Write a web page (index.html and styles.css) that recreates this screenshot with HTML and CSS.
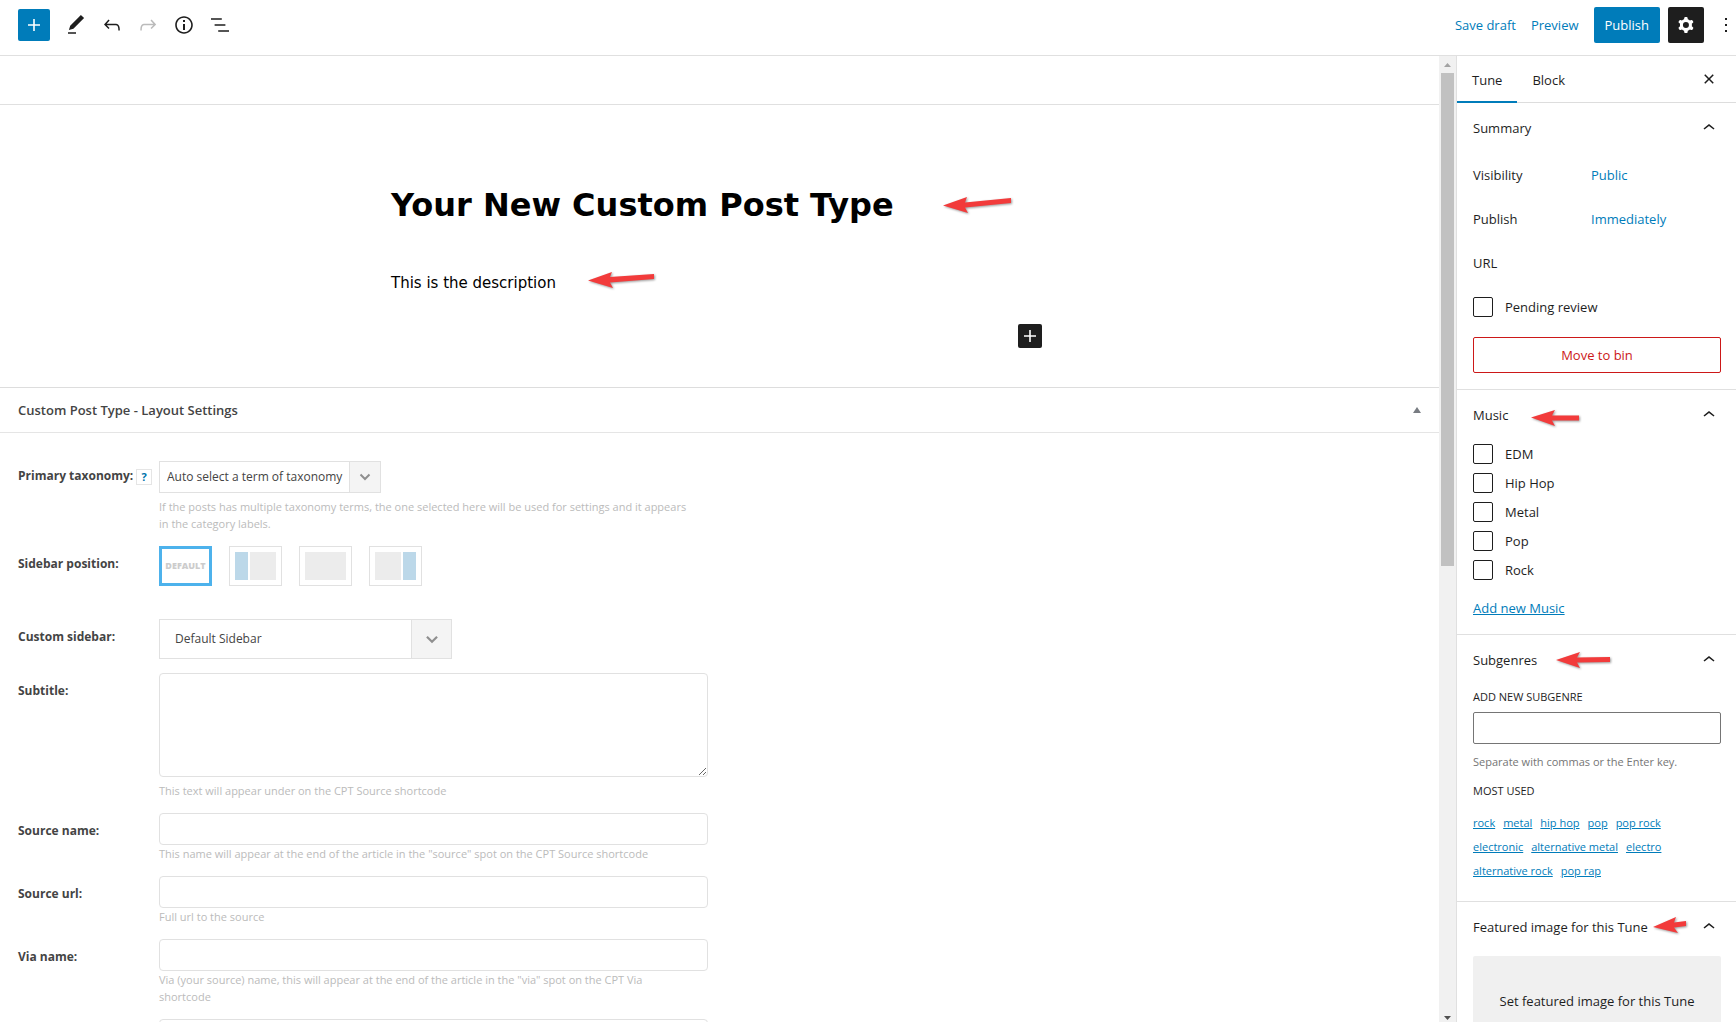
FILE: index.html
```
<!DOCTYPE html>
<html lang="en">
<head>
  <meta charset="UTF-8">
  <title>Add New Tune</title>
  <link rel="stylesheet" href="styles.css">
</head>
<body>

<svg class="defs" aria-hidden="true">
  <symbol id="chevron-up" viewBox="0 0 24 24"><path d="M6.5 12.4L12 8l5.5 4.4-.9 1.2L12 10l-4.5 3.6-1-1.2z"/></symbol>
  <symbol id="plus" viewBox="0 0 24 24"><path d="M18 11.2h-5.2V6h-1.6v5.2H6v1.6h5.2V18h1.6v-5.2H18z"/></symbol>
  <symbol id="caret" viewBox="0 0 12 8"><path d="M1.5 1.5L6 6l4.5-4.5" fill="none" stroke="#8f8f8f" stroke-width="2"/></symbol>
</svg>

<header class="toolbar">
  <div class="toolbar-left">
    <button class="btn-insert" aria-label="Add block"><svg width="24" height="24"><use href="#plus"/></svg></button>
    <button class="btn-icon" aria-label="Tools"><svg width="24" height="24" viewBox="0 0 24 24"><path d="M20.1 5.1L16.9 2 6.2 12.7l-1.3 4.4 4.5-1.3L20.1 5.1zM4 20.8h8v-1.5H4v1.5z"/></svg></button>
    <button class="btn-icon" aria-label="Undo"><svg width="24" height="24" viewBox="0 0 24 24"><path d="M18.3 11.7c-.6-.6-1.4-.9-2.3-.9H6.7l2.9-3.3-1.1-1-4.5 5L8.5 16l1-1-2.7-2.7H16c.5 0 .9.2 1.3.5 1 1 1 3.4 1 4.5v.3h1.5v-.2c0-1.5 0-4.3-1.5-5.7z"/></svg></button>
    <button class="btn-icon" aria-label="Redo" disabled><svg width="24" height="24" viewBox="0 0 24 24"><path d="M15.6 6.5l-1.1 1 2.9 3.3H8c-.9 0-1.7.3-2.3.9-1.4 1.5-1.4 4.2-1.4 5.6v.2h1.5v-.3c0-1.1 0-3.5 1-4.5.3-.3.7-.5 1.3-.5h9.2L14.5 15l1.1 1.1 4.6-4.6-4.6-5z"/></svg></button>
    <button class="btn-icon" aria-label="Details"><svg width="24" height="24" viewBox="0 0 24 24"><path d="M12 3.2c-4.8 0-8.8 3.9-8.8 8.8 0 4.8 3.9 8.8 8.8 8.8 4.8 0 8.8-3.9 8.8-8.8 0-4.8-4-8.8-8.8-8.8zm0 16c-4 0-7.2-3.3-7.2-7.2C4.8 8 8 4.8 12 4.8s7.2 3.3 7.2 7.2c0 4-3.2 7.2-7.2 7.2zM11 17h2v-6h-2v6zm0-8h2V7h-2v2z"/></svg></button>
    <button class="btn-icon" aria-label="List view"><svg width="24" height="24" viewBox="0 0 24 24"><path d="M13.8 5.2H3v1.5h10.8V5.2zm-3.6 12v1.5H21v-1.5H10.2zm7.2-6H6.6v1.5h10.8v-1.5z"/></svg></button>
  </div>
  <div class="toolbar-right">
    <button class="btn-link">Save draft</button>
    <button class="btn-link">Preview</button>
    <button class="btn-publish">Publish</button>
    <button class="btn-settings" aria-label="Settings"><svg width="24" height="24" viewBox="0 0 24 24"><path fill-rule="evenodd" d="M10.289 4.836A1 1 0 0111.275 4h1.306a1 1 0 01.987.836l.244 1.466c.787.26 1.503.679 2.108 1.218l1.393-.522a1 1 0 011.216.437l.653 1.13a1 1 0 01-.23 1.273l-1.148.944a6.025 6.025 0 010 2.435l1.149.946a1 1 0 01.23 1.272l-.653 1.13a1 1 0 01-1.216.437l-1.394-.522c-.605.54-1.32.958-2.108 1.218l-.244 1.466a1 1 0 01-.987.836h-1.306a1 1 0 01-.986-.836l-.244-1.466a5.995 5.995 0 01-2.108-1.218l-1.394.522a1 1 0 01-1.217-.436l-.653-1.131a1 1 0 01.23-1.272l1.149-.946a6.026 6.026 0 010-2.435l-1.148-.944a1 1 0 01-.23-1.272l.653-1.131a1 1 0 011.217-.437l1.393.522a5.994 5.994 0 012.108-1.218l.244-1.466zM14.929 12a3 3 0 11-6 0 3 3 0 016 0z"/></svg></button>
    <button class="btn-more" aria-label="Options"><svg width="24" height="24" viewBox="0 0 24 24"><path d="M13 19h-2v-2h2v2zm0-6h-2v-2h2v2zm0-6h-2V5h2v2z"/></svg></button>
  </div>
</header>

<div class="workspace">
  <main class="content">
    <div class="strip"></div>

    <section class="canvas">
      <div class="canvas-inner">
        <h1 class="post-title">Your New Custom Post Type
          <svg class="arrow arrow-title" width="70" height="20" viewBox="0 0 70 20"><path d="M1 10.5L25 2l-2 5.5L69 3v5l-46 4.5 3 5.5z"/></svg>
        </h1>
        <p class="post-text">This is the description
          <svg class="arrow arrow-text" width="68" height="20" viewBox="0 0 68 20"><path d="M1 10.5L25 2l-2 5L67 4v5l-44 3.5 3 5.5z"/></svg>
        </p>
        <button class="btn-append" aria-label="Add block"><svg width="24" height="24"><use href="#plus"/></svg></button>
      </div>
    </section>

    <section class="metabox">
      <div class="metabox-head">
        <h2>Custom Post Type - Layout Settings</h2>
        <button class="metabox-toggle" aria-label="Toggle panel"><svg width="8" height="6" viewBox="0 0 8 6"><path d="M4 0l4 6H0z"/></svg></button>
      </div>

      <div class="fields">
        <div class="field field-top">
          <div class="field-name"><label for="taxonomy">Primary taxonomy:</label><button class="help" aria-label="Help">?</button></div>
          <div class="field-body">
            <div class="select select-small">
              <select id="taxonomy"><option>Auto select a term of taxonomy</option></select>
              <span class="select-arrow"><svg width="12" height="8"><use href="#caret"/></svg></span>
            </div>
            <p class="hint hint-far">If the posts has multiple taxonomy terms, the one selected here will be used for settings and it appears in the category labels.</p>
          </div>
        </div>

        <div class="field field-positions">
          <div class="field-name" id="position-label">Sidebar position:</div>
          <div class="positions" role="group" aria-labelledby="position-label">
            <button class="position active">DEFAULT</button>
            <button class="position" aria-label="Left"><span class="bar"></span><span class="page"></span></button>
            <button class="position" aria-label="None"><span class="page"></span></button>
            <button class="position" aria-label="Right"><span class="page"></span><span class="bar"></span></button>
          </div>
        </div>

        <div class="field">
          <div class="field-name"><label for="sidebar">Custom sidebar:</label></div>
          <div class="select select-large">
            <select id="sidebar"><option>Default Sidebar</option></select>
            <span class="select-arrow"><svg width="14" height="9"><use href="#caret"/></svg></span>
          </div>
        </div>

        <div class="field">
          <div class="field-name"><label for="subtitle">Subtitle:</label></div>
          <div class="field-body">
            <textarea id="subtitle"></textarea>
            <p class="hint hint-far">This text will appear under on the CPT Source shortcode</p>
          </div>
        </div>

        <div class="field">
          <div class="field-name"><label for="source-name">Source name:</label></div>
          <div class="field-body">
            <input type="text" id="source-name">
            <p class="hint">This name will appear at the end of the article in the "source" spot on the CPT Source shortcode</p>
          </div>
        </div>

        <div class="field">
          <div class="field-name"><label for="source-url">Source url:</label></div>
          <div class="field-body">
            <input type="text" id="source-url">
            <p class="hint">Full url to the source</p>
          </div>
        </div>

        <div class="field">
          <div class="field-name"><label for="via-name">Via name:</label></div>
          <div class="field-body">
            <input type="text" id="via-name">
            <p class="hint">Via (your source) name, this will appear at the end of the article in the "via" spot on the CPT Via shortcode</p>
          </div>
        </div>

        <div class="field">
          <div class="field-name"></div>
          <div class="field-body"><input type="text" aria-label="Via url"></div>
        </div>
      </div>
    </section>
  </main>

  <div class="scrollbar">
    <svg class="scroll-up" width="17" height="17" viewBox="0 0 17 17"><path d="M5 11l3.5-4 3.5 4z"/></svg>
    <div class="thumb"></div>
    <svg class="scroll-down" width="17" height="17" viewBox="0 0 17 17"><path d="M5 11l3.5 4 3.5-4z"/></svg>
  </div>

  <aside class="sidebar">
    <div class="tabs">
      <button class="tab active">Tune</button>
      <button class="tab">Block</button>
      <button class="close" aria-label="Close settings"><svg width="24" height="24" viewBox="0 0 24 24"><path d="M12 13.06l3.712 3.713 1.061-1.06L13.061 12l3.712-3.712-1.06-1.06L12 10.938 8.288 7.227l-1.061 1.06L10.939 12l-3.712 3.712 1.06 1.061L12 13.061z"/></svg></button>
    </div>

    <section class="panel">
      <h2><button class="panel-head">Summary<svg class="chevron" width="24" height="24"><use href="#chevron-up"/></svg></button></h2>
      <div class="panel-row"><span>Visibility</span><button class="btn-link">Public</button></div>
      <div class="panel-row"><span>Publish</span><button class="btn-link">Immediately</button></div>
      <div class="panel-row"><span>URL</span></div>
      <label class="check check-review"><input type="checkbox">Pending review</label>
      <button class="btn-bin">Move to bin</button>
    </section>

    <section class="panel">
      <h2><button class="panel-head">Music<svg class="arrow arrow-music" width="50" height="20" viewBox="0 0 50 20"><path d="M1 9.5L25 2l-3 5.5h27v5H22L25 18z"/></svg><svg class="chevron" width="24" height="24"><use href="#chevron-up"/></svg></button></h2>
      <div class="checks">
        <label class="check"><input type="checkbox">EDM</label>
        <label class="check"><input type="checkbox">Hip Hop</label>
        <label class="check"><input type="checkbox">Metal</label>
        <label class="check"><input type="checkbox">Pop</label>
        <label class="check"><input type="checkbox">Rock</label>
      </div>
      <a class="add-term" href="#">Add new Music</a>
    </section>

    <section class="panel">
      <h2><button class="panel-head">Subgenres<svg class="arrow arrow-subgenres" width="56" height="20" viewBox="0 0 56 20"><path d="M1 10L25 2l-3 5.5L55 7v5l-33 .5L25 18z"/></svg><svg class="chevron" width="24" height="24"><use href="#chevron-up"/></svg></button></h2>
      <label class="caps" for="subgenre">ADD NEW SUBGENRE</label>
      <input type="text" id="subgenre" class="token-input">
      <p class="token-help">Separate with commas or the Enter key.</p>
      <h3 class="caps">MOST USED</h3>
      <div class="tags">
        <a href="#">rock</a>
        <a href="#">metal</a>
        <a href="#">hip hop</a>
        <a href="#">pop</a>
        <a href="#">pop rock</a>
        <a href="#">electronic</a>
        <a href="#">alternative metal</a>
        <a href="#">electro</a>
        <a href="#">alternative rock</a>
        <a href="#">pop rap</a>
      </div>
    </section>

    <section class="panel">
      <h2><button class="panel-head">Featured image for this Tune<svg class="arrow arrow-featured" width="36" height="20" viewBox="0 0 36 20"><path d="M1 12L24 2l-2 5.5L34 6v5l-12 1.5 4 5.5z"/></svg><svg class="chevron" width="24" height="24"><use href="#chevron-up"/></svg></button></h2>
      <button class="btn-image">Set featured image for this Tune</button>
    </section>
  </aside>
</div>

</body>
</html>
```

FILE: styles.css
```
* {
  box-sizing: border-box;
}

body {
  margin: 0;
  height: 100vh;
  display: flex;
  flex-direction: column;
  overflow: hidden;
  font-family: "Segoe UI", "Open Sans", sans-serif;
  font-size: 13px;
  line-height: 20px;
  color: #1e1e1e;
  background: #fff;
}

h1, h2, h3, p {
  margin: 0;
  font-size: inherit;
}

button, input, select, textarea {
  font: inherit;
  color: inherit;
}

button {
  padding: 0;
  border: none;
  background: none;
  cursor: pointer;
}

svg {
  display: block;
  fill: currentColor;
}

.defs {
  display: none;
}

/* toolbar */
.toolbar {
  display: flex;
  flex: none;
  justify-content: space-between;
  height: 56px;
  padding-bottom: 5px;
  border-bottom: 1px solid #e0e0e0;
}

.toolbar-left, .toolbar-right {
  display: flex;
  align-items: center;
}

.toolbar-left {
  padding-left: 18px;
}

.toolbar-left button, .toolbar-right button {
  display: flex;
  align-items: center;
  justify-content: center;
}

.btn-insert {
  width: 32px;
  height: 32px;
  margin-right: 8px;
  border-radius: 2px;
  background: #007cba;
  color: #fff;
}

.btn-icon {
  width: 36px;
  height: 36px;
}

.btn-icon:disabled {
  color: #bbb;
}

.btn-link {
  color: #007cba;
}

.toolbar-right .btn-link {
  margin-right: 15px;
}

.btn-publish {
  height: 36px;
  padding: 0 11px;
  border-radius: 2px;
  background: #007cba;
  color: #fff;
}

.btn-settings {
  width: 36px;
  height: 36px;
  margin: 0 4px 0 8px;
  border-radius: 2px;
  background: #1e1e1e;
  color: #fff;
}

.btn-more {
  width: 36px;
  margin-right: -8px;
}

/* layout */
.workspace {
  display: flex;
  flex: 1;
  min-height: 0;
}

.content {
  flex: 1;
  min-width: 0;
  overflow: hidden;
}

.scrollbar {
  display: flex;
  flex: none;
  flex-direction: column;
  align-items: center;
  width: 17px;
  background: #f1f1f1;
}

.scroll-up {
  color: #a3a3a3;
}

.scroll-down {
  margin-top: auto;
  color: #505050;
}

.thumb {
  width: 13px;
  height: 51%;
  background: #c1c1c1;
}

.sidebar {
  flex: none;
  width: 280px;
  overflow: hidden;
  border-left: 1px solid #e0e0e0;
}

/* editor canvas */
.strip {
  height: 49px;
  border-bottom: 1px solid #e0e0e0;
}

.canvas {
  padding: 80px 6px 39px 0;
}

.canvas-inner {
  max-width: 651px;
  margin: 0 auto;
  font-family: Verdana, "DejaVu Sans", sans-serif;
  color: #000;
}

.post-title, .post-text {
  position: relative;
}

.post-title {
  font-size: 32px;
  line-height: 40px;
}

.post-text {
  margin: 44px 0 27px;
  font-size: 15px;
  line-height: 28px;
}

.btn-append {
  display: block;
  margin-left: auto;
  border-radius: 2px;
  background: #1e1e1e;
  color: #fff;
}

/* red arrows over the text */
.arrow {
  position: absolute;
  color: #f23b3b;
  filter: drop-shadow(1px 1px 1px rgba(0, 0, 0, 0.4));
}

.arrow-title {
  left: 551px;
  top: 10px;
}

.arrow-text {
  left: 196px;
  top: 1px;
}

.arrow-music {
  left: 57px;
  top: 18px;
}

.arrow-subgenres {
  left: 82px;
  top: 15px;
}

.arrow-featured {
  left: 179px;
  top: 13px;
}

/* metabox */
.metabox {
  border-top: 1px solid #ddd;
  color: #444;
}

.metabox-head {
  display: flex;
  align-items: center;
  justify-content: space-between;
  height: 45px;
  padding: 0 18px;
  border-bottom: 1px solid #e5e5e5;
}

.metabox-head h2 {
  font-size: 13px;
  font-weight: 600;
}

.metabox-toggle {
  color: #787c82;
}

.fields {
  display: grid;
  gap: 14px;
  padding: 28px 18px;
}

.field {
  display: grid;
  grid-template-columns: 141px minmax(0, 549px);
}

.field-name {
  display: flex;
  align-items: flex-start;
  padding-top: 9px;
  font-size: 12px;
  font-weight: 700;
  line-height: 18px;
  white-space: nowrap;
}

.field-top .field-name {
  padding-top: 6px;
}

.help {
  width: 16px;
  height: 16px;
  margin: 2px 7px 0 auto;
  border: 1px solid #e5e5e5;
  font-size: 11px;
  font-weight: 700;
  line-height: 14px;
  color: #0073aa;
}

.field-body input, .field-body textarea {
  display: block;
  width: 100%;
  border: 1px solid #e1e1e1;
  border-radius: 4px;
  background: #fff;
}

.field-body input {
  height: 32px;
}

.field-body textarea {
  height: 104px;
}

.hint {
  max-width: 530px;
  font-size: 11px;
  line-height: 17px;
  color: #bbb;
}

.hint-far {
  margin-top: 5px;
}

.select {
  position: relative;
  border: 1px solid #e1e1e1;
}

.select select {
  width: 100%;
  height: 100%;
  border: none;
  background: #fff;
  font-size: 12px;
  appearance: none;
}

.select-arrow {
  position: absolute;
  top: 0;
  right: 0;
  bottom: 0;
  display: flex;
  align-items: center;
  justify-content: center;
  border-left: 1px solid #e1e1e1;
  background: #f4f4f4;
  pointer-events: none;
}

.select-small {
  width: 222px;
  height: 32px;
}

.select-small select {
  padding: 0 7px;
}

.select-small .select-arrow {
  width: 31px;
}

.select-large {
  width: 293px;
  height: 40px;
}

.select-large select {
  padding: 0 15px;
}

.select-large .select-arrow {
  width: 40px;
}

.field-positions {
  margin-bottom: 19px;
}

.positions {
  display: flex;
  gap: 17px;
}

.position {
  display: flex;
  gap: 2px;
  width: 53px;
  height: 40px;
  padding: 5px;
  border: 1px solid #e1e1e1;
}

.position.active {
  align-items: center;
  justify-content: center;
  padding: 0;
  border: 3px solid #4db2ec;
  font-size: 9px;
  font-weight: 800;
  color: #ccc;
}

.position .bar {
  width: 13px;
  height: 28px;
  background: #bcd8e9;
}

.position .page {
  flex: 1;
  height: 28px;
  background: #ececec;
}

/* settings sidebar */
.tabs {
  display: flex;
  height: 47px;
  border-bottom: 1px solid #ddd;
}

.tab {
  height: 47px;
  padding: 0 15px;
  font-weight: 500;
}

.tab.active {
  box-shadow: inset 0 -2px 0 #007cba;
}

.close {
  margin-left: auto;
  padding-right: 15px;
}

.panel {
  padding: 0 15px 16px 16px;
  border-bottom: 1px solid #e0e0e0;
}

.panel-head {
  position: relative;
  display: flex;
  align-items: center;
  justify-content: space-between;
  width: 100%;
  height: 50px;
  margin-bottom: 4px;
  font-weight: 500;
}

.panel-row {
  display: grid;
  grid-template-columns: 118px 1fr;
  align-items: center;
  justify-items: start;
  height: 36px;
  margin-bottom: 8px;
}

.check {
  display: flex;
  align-items: center;
  gap: 12px;
}

.check input {
  width: 20px;
  height: 20px;
  margin: 0;
  border: 1px solid #1e1e1e;
  border-radius: 2px;
  appearance: none;
}

.check-review {
  margin: 16px 0 20px;
}

.btn-bin {
  width: 100%;
  height: 36px;
  border: 1px solid #cc1818;
  border-radius: 2px;
  color: #cc1818;
}

.checks {
  display: grid;
  gap: 9px;
  margin-bottom: 18px;
}

.sidebar a {
  color: #007cba;
}

.add-term {
  display: block;
}

.caps {
  display: block;
  font-size: 11px;
  font-weight: 500;
  line-height: 16px;
}

.token-input {
  display: block;
  width: 100%;
  height: 32px;
  margin: 7px 0 10px;
  border: 1px solid #757575;
  border-radius: 2px;
}

.token-help {
  margin-bottom: 13px;
  font-size: 11px;
  line-height: 16px;
  color: #757575;
}

.tags {
  display: flex;
  flex-wrap: wrap;
  gap: 0 8px;
  margin: 12px 0 2px;
  padding-right: 16px;
  font-size: 11px;
  line-height: 24px;
}

.btn-image {
  width: 100%;
  height: 90px;
  border-radius: 2px;
  background: #f0f0f0;
}
```
